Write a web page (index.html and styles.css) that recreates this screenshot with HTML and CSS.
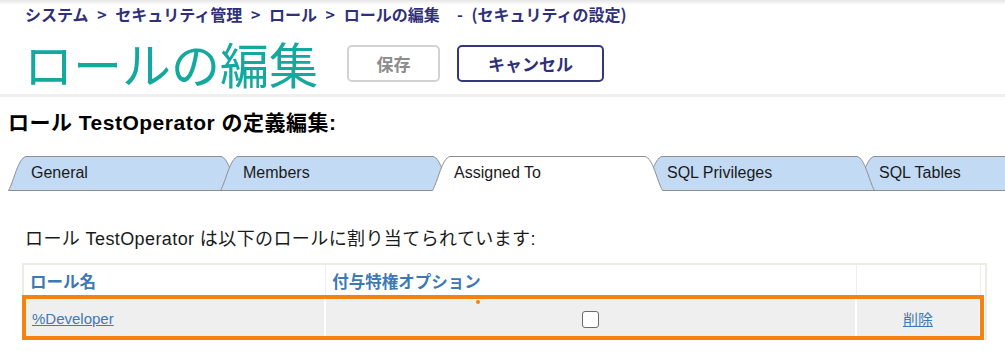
FILE: index.html
```html
<!DOCTYPE html>
<html lang="ja">
<head>
<meta charset="utf-8">
<title>ロールの編集</title>
<link rel="stylesheet" href="styles.css">
</head>
<body>
<header class="page-header">
  <div class="breadcrumb">システム &gt; セキュリティ管理 &gt; ロール &gt; ロールの編集 &nbsp;- (セキュリティの設定)</div>
  <div class="title-row">
    <h1 class="title">ロールの編集</h1>
    <button class="btn btn-save" type="button">保存</button>
    <button class="btn btn-cancel" type="button">キャンセル</button>
  </div>
</header>
<main class="content">
  <h2 class="section-title">ロール TestOperator の定義編集:</h2>
  <div class="tabs">
    <div class="tab z1">
      <svg class="tab-shape" viewBox="0 0 231 35" width="231" height="35"><path class="fill" d="M0.5,34.5 C6,25 10,2 18,0.5 L213,0.5 C221,2 225,25 230.5,34.5 Z"/></svg>
      <span class="tab-label">General</span>
    </div>
    <div class="tab z2">
      <svg class="tab-shape" viewBox="0 0 231 35" width="231" height="35"><path class="fill" d="M0.5,34.5 C6,25 10,2 18,0.5 L213,0.5 C221,2 225,25 230.5,34.5 Z"/></svg>
      <span class="tab-label">Members</span>
    </div>
    <div class="tab active">
      <svg class="tab-shape" viewBox="0 0 231 36" width="231" height="36"><path class="fill-active" d="M0.5,36 L0.5,34.5 C6,25 10,2 18,0.5 L213,0.5 C221,2 225,25 230.5,34.5 L230.5,36 Z"/><path class="edge" d="M0.5,34.5 C6,25 10,2 18,0.5 L213,0.5 C221,2 225,25 230.5,34.5"/></svg>
      <span class="tab-label">Assigned To</span>
    </div>
    <div class="tab z2">
      <svg class="tab-shape" viewBox="0 0 231 35" width="231" height="35"><path class="fill" d="M0.5,34.5 C6,25 10,2 18,0.5 L213,0.5 C221,2 225,25 230.5,34.5 Z"/></svg>
      <span class="tab-label">SQL Privileges</span>
    </div>
    <div class="tab z1">
      <svg class="tab-shape" viewBox="0 0 231 35" width="231" height="35"><path class="fill" d="M0.5,34.5 C6,25 10,2 18,0.5 L213,0.5 C221,2 225,25 230.5,34.5 Z"/></svg>
      <span class="tab-label">SQL Tables</span>
    </div>
  </div>
  <p class="intro">ロール TestOperator は以下のロールに割り当てられています:</p>
  <div class="table-wrap">
    <table class="grid">
      <thead>
        <tr>
          <th class="col-name">ロール名</th>
          <th class="col-opt">付与特権オプション</th>
          <th class="col-act"></th>
        </tr>
      </thead>
      <tbody>
        <tr>
          <td class="col-name"><a href="#">%Developer</a></td>
          <td class="col-opt center"><input type="checkbox" class="chk"></td>
          <td class="col-act center"><a href="#">削除</a></td>
        </tr>
      </tbody>
    </table>
    <div class="highlight"></div>
    <div class="dot"></div>
  </div>
</main>
</body>
</html>
```
FILE: styles.css
```css
html, body {
  margin: 0;
  padding: 0;
  background: #fff;
}
body {
  font-family: "Noto Sans CJK JP", "Liberation Sans", sans-serif;
  color: #000;
  overflow: hidden;
}
.page-header {
  padding: 4px 0 2px 25px;
  border-bottom: 3px solid #f0f0f0;
  background: linear-gradient(#e6e6e6, #ffffff 5px) no-repeat;
}
.breadcrumb {
  font-size: 16px;
  line-height: 20px;
  font-weight: 700;
  color: #30307a;
  white-space: nowrap;
  word-spacing: 5px;
}
.title-row {
  display: flex;
  align-items: center;
  margin-top: 10px;
  height: 58px;
}
.title {
  margin: 0 29px 0 -1px;
  font-size: 49px;
  line-height: 58px;
  font-weight: 400;
  color: #14a89e;
}
.btn {
  height: 37px;
  border-radius: 5px;
  background: #fff;
  font-family: "Noto Sans CJK JP", sans-serif;
  font-size: 17px;
  font-weight: 700;
  padding: 0;
  margin-top: 1px;
}
.btn-save {
  width: 93px;
  border: 2px solid #d2d2d2;
  color: #8c8c8c;
}
.btn-cancel {
  width: 147px;
  margin-left: 17px;
  border: 2px solid #343878;
  color: #30307a;
}
.content {
  padding: 0;
}
.section-title {
  margin: 13px 0 0 8px;
  font-family: "Liberation Sans", "Noto Sans CJK JP", sans-serif;
  font-size: 21px;
  line-height: 26px;
  font-weight: 700;
  letter-spacing: 0.5px;
}
.tabs {
  display: flex;
  margin-top: 20px;
  padding-left: 8px;
  height: 36px;
  overflow: hidden;
}
.tab {
  position: relative;
  flex: 0 0 231px;
  height: 35px;
  margin-right: -19px;
}
.tab.z1 { z-index: 1; }
.tab.z2 { z-index: 2; }
.tab.active { z-index: 5; height: 36px; }
.tab-shape {
  position: absolute;
  left: 0;
  top: 0;
  display: block;
}
.tab-shape .fill {
  fill: #c3daf5;
  stroke: #8e8e8e;
  stroke-width: 1;
}
.tab-shape .fill-active {
  fill: #ffffff;
  stroke: none;
}
.tab-shape .edge {
  fill: none;
  stroke: #8e8e8e;
  stroke-width: 1;
}
.tab-label {
  position: relative;
  display: block;
  padding: 7px 0 0 23px;
  font-family: "Liberation Sans", sans-serif;
  font-size: 16px;
  line-height: 20px;
  color: #1a1a1a;
  white-space: nowrap;
}
.active .tab-label {
  padding-left: 22px;
}
.intro {
  margin: 35px 0 0 25px;
  font-family: "Liberation Sans", "Noto Sans CJK JP", sans-serif;
  font-size: 18px;
  line-height: 24px;
  letter-spacing: 0.4px;
  color: #1a1a1a;
}
.table-wrap {
  position: relative;
  margin: 12px 0 0 22px;
  width: 965px;
}
.grid {
  width: 100%;
  border-collapse: separate;
  border-spacing: 0;
  border: 2px solid #ecebe4;
  padding: 0 4px 0 0;
}
.grid th {
  height: 31px;
  padding: 0 6px;
  text-align: left;
  vertical-align: middle;
  font-size: 16.5px;
  font-weight: 700;
  color: #3d79b5;
  border-right: 1px solid #eeeeee;
  background: #fff;
}
.grid td {
  height: 40px;
  padding: 0 8px;
  background: #efefef;
  border-right: 2px solid #ffffff;
  border-top: 2px solid #fffdf2;
  font-family: "Liberation Sans", "Noto Sans CJK JP", sans-serif;
  font-size: 15px;
}
.grid .col-name { width: 286px; }
.grid .col-opt { width: 517px; }
.grid .col-act { width: 107px; }
.grid td.center { text-align: center; }
.grid a {
  color: #3d7ab8;
  text-decoration: underline;
}
.chk {
  appearance: none;
  width: 17px;
  height: 17px;
  margin: 3px 0 0;
  border: 1.5px solid #6b6b6b;
  border-radius: 3px;
  background: #fff;
  vertical-align: middle;
}
.highlight {
  position: absolute;
  left: 0;
  top: 32px;
  width: 954px;
  height: 37px;
  border: 4px solid #f5820f;
  pointer-events: none;
}
.dot {
  position: absolute;
  left: 454px;
  top: 37px;
  width: 4px;
  height: 4px;
  border-radius: 50%;
  background: #f5820f;
}
```
